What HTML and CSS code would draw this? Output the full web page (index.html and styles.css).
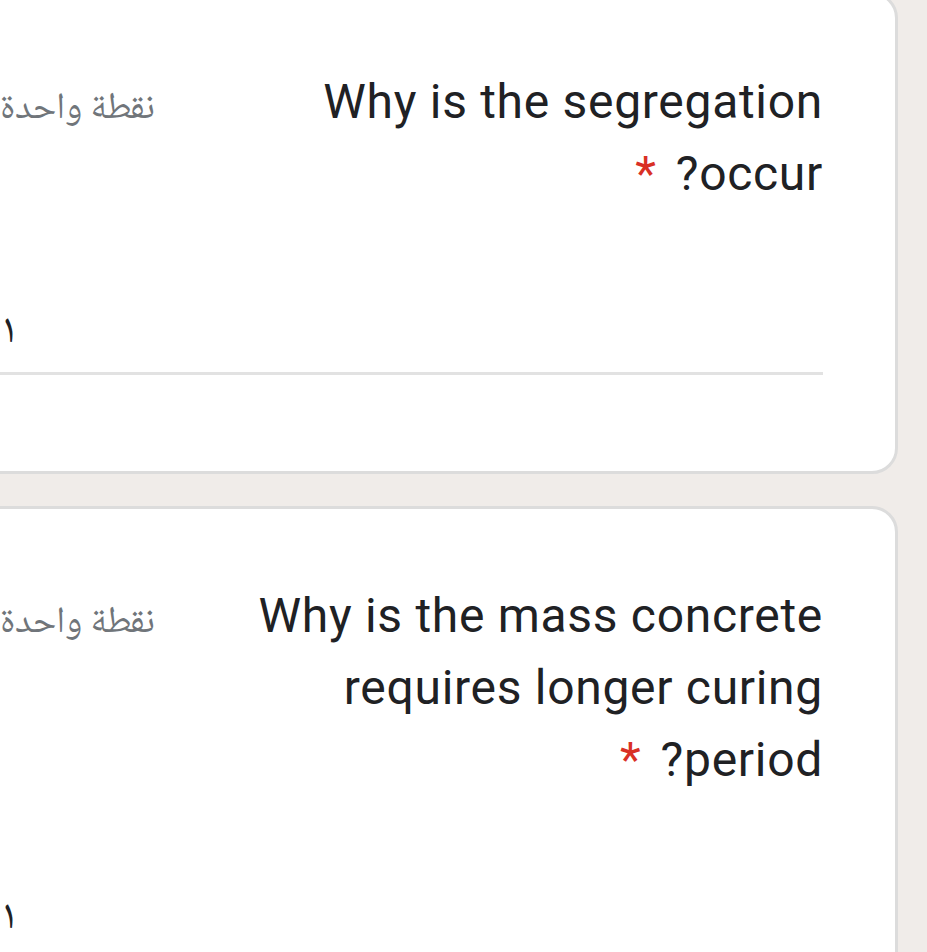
FILE: index.html
```html
<!DOCTYPE html>
<html lang="ar" dir="rtl">
<head>
<meta charset="utf-8">
<title>Form</title>
<link rel="stylesheet" href="styles.css">
</head>
<body>
<main class="form">
  <section class="card">
    <div class="q-head">
      <div class="q-title">Why is the segregation occur?<span class="req"> *</span></div>
      <div class="q-points">نقطة واحدة</div>
    </div>
    <div class="answer"><span class="answer-text">١</span></div>
  </section>
  <section class="card">
    <div class="q-head">
      <div class="q-title">Why is the mass concrete requires longer curing period?<span class="req"> *</span></div>
      <div class="q-points">نقطة واحدة</div>
    </div>
    <div class="answer"><span class="answer-text">١</span></div>
  </section>
</main>
</body>
</html>
```

FILE: styles.css
```css
html, body {
  margin: 0;
  padding: 0;
  overflow: hidden;
  background: #f0ece9;
}
body {
  font-family: Roboto, "DejaVu Sans", sans-serif;
  color: #202124;
}
.form {
  display: flex;
  flex-direction: column;
  gap: 32px;
  margin: -8px 29px 0 -75px;
}
.card {
  background: #fff;
  border: 3px solid #dcdcdc;
  border-radius: 26px;
  padding: 71px 72px 96px 72px;
}
.q-head {
  display: flex;
  align-items: baseline;
  gap: 56px;
}
.q-title {
  flex: 1;
  font-size: 48px;
  line-height: 72px;
  letter-spacing: 0.7px;
  color: #202124;
}
.req {
  color: #d93025;
  letter-spacing: 4px;
}
.q-points {
  white-space: nowrap;
  font-size: 37px;
  color: #70757a;
  font-family: "Noto Naskh Arabic", "Noto Sans Arabic", "DejaVu Sans", sans-serif;
}
.answer {
  margin-top: 99px;
  padding-bottom: 15px;
  border-bottom: 3px solid #e2e2e2;
  direction: ltr;
}
.answer-text {
  display: block;
  font-family: "Noto Naskh Arabic", "Noto Sans Arabic", "DejaVu Sans", sans-serif;
  font-size: 42px;
  line-height: 48px;
  color: #202124;
}
```
